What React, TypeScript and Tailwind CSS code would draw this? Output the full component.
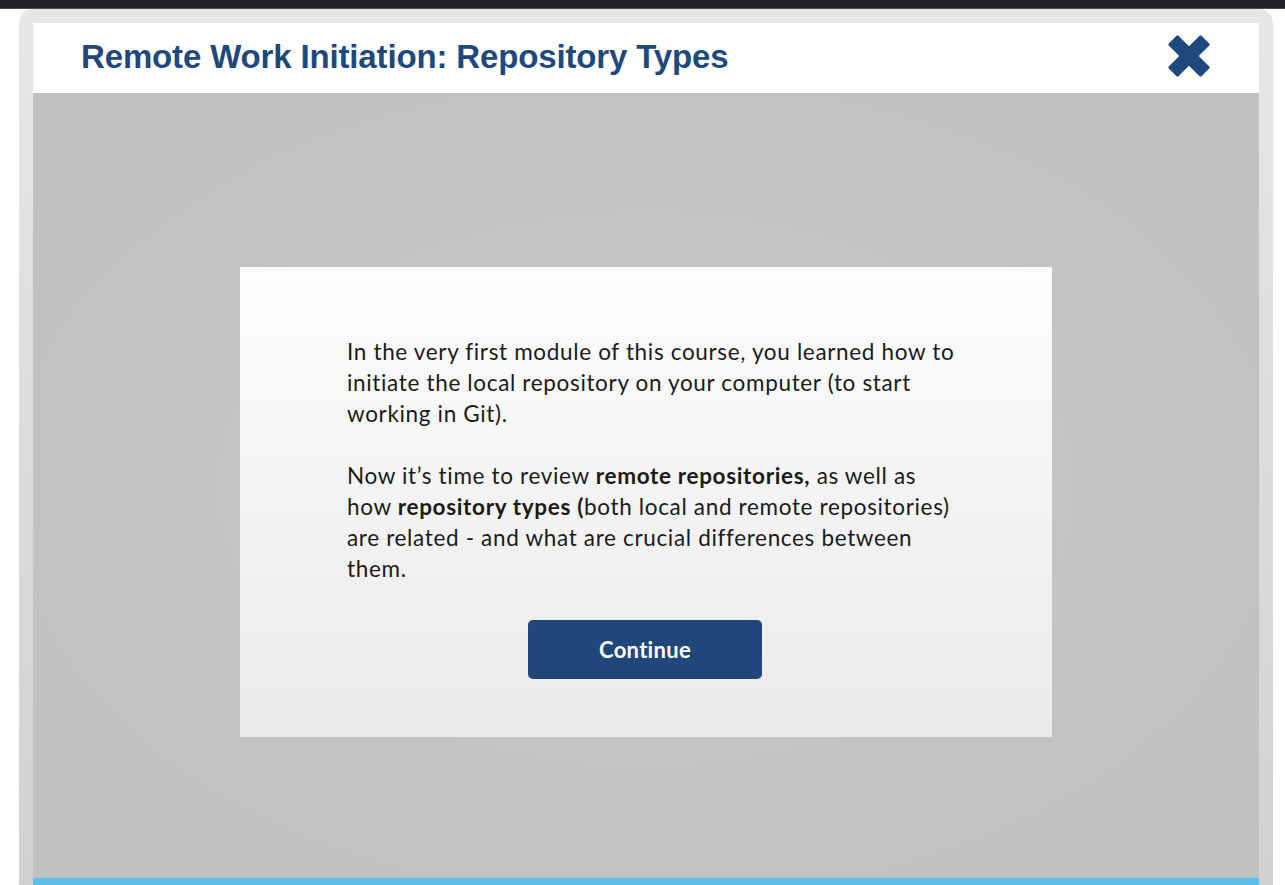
import React from "react";

export default function App() {
  return (
    <div className="w-[1285px] h-[885px] bg-white overflow-hidden flex flex-col">
      <div className="h-[9px] shrink-0 bg-[#202124] border-b border-[#4a4b4e]" />
      <div className="flex-1 flex min-h-0 pl-[19px] pr-[12px]">
        <div className="flex-1 flex flex-col rounded-t-[14px] bg-gradient-to-b from-[#e7e7e7] to-[#d1d1d1] pt-[14px] px-[14px]">
          <div className="h-[70px] shrink-0 bg-white flex items-center justify-between pl-[48px] pr-[47px]">
            <h1
              className="text-[33px] font-bold text-[#1f497d] leading-none tracking-[-0.15px] mt-[-3px]"
              style={{ fontFamily: '"Liberation Sans", Arial, sans-serif' }}
            >
              Remote Work Initiation: Repository Types
            </h1>
            <svg width="46" height="44" viewBox="0 0 44 42" className="mt-[-4px]">
              <g fill="#1f497d" stroke="#1f497d" strokeWidth="2.5" strokeLinejoin="round">
                <polygon points="3.5,10 11,2.5 40.5,32 33,39.5" />
                <polygon points="40.5,10 33,2.5 3.5,32 11,39.5" />
              </g>
            </svg>
          </div>
          <div className="flex-1 flex flex-col min-h-0 bg-[radial-gradient(ellipse_at_center,#c7c8c9_0%,#c3c4c5_45%,#c0c1c2_75%)]">
            <div className="flex-1 flex justify-center pt-[174px]">
              <div
                className="w-[812px] h-[470px] bg-gradient-to-b from-[#fdfdfd] to-[#eaeaea] pt-[69px] pl-[107px] flex flex-col"
                style={{ fontFamily: 'Lato, "Open Sans", sans-serif' }}
              >
                <div className="text-[22.5px] leading-[31px] text-[#1a1a1a] tracking-[0.66px] whitespace-nowrap">
                  <p>
                    In the very first module of this course, you learned how to
                    <br />
                    initiate the local repository on your computer (to start
                    <br />
                    working in Git).
                  </p>
                  <p className="mt-[31px]">
                    Now it’s time to review <b>remote repositories,</b> as well as
                    <br />
                    how <b>repository types (</b>both local and remote repositories)
                    <br />
                    are related - and what are crucial differences between
                    <br />
                    them.
                  </p>
                </div>
                <div className="flex justify-center pr-[107px] mt-[36px] -ml-[2px]">
                  <button className="w-[234px] h-[59px] rounded-[5px] bg-[#21467a] text-white text-[22px] font-bold tracking-[0.3px]">
                    Continue
                  </button>
                </div>
              </div>
            </div>
            <div className="h-[7px] shrink-0 bg-[#5bbfe8]" />
          </div>
        </div>
      </div>
    </div>
  );
}
